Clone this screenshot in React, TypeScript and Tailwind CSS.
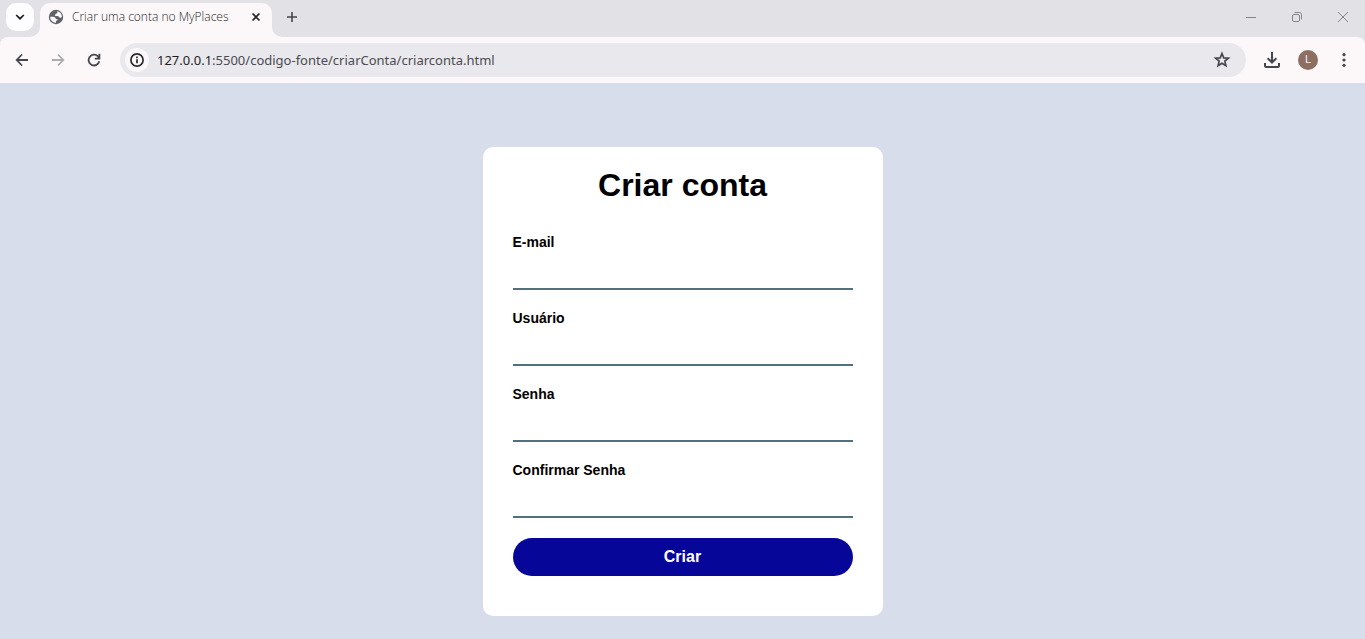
import React from "react";

function TabStrip() {
  return (
    <div className="flex h-[37px] items-start bg-[#e2e1e6] pl-[6px]">
      <button
        type="button"
        aria-label="Pesquisar guias"
        className="mt-[3px] flex size-7 shrink-0 items-center justify-center rounded-[10px] bg-[#fdfcfe] text-[#1f1f1f]"
      >
        <svg viewBox="0 0 10 6" className="h-[6px] w-[10px]" fill="none" stroke="currentColor" strokeWidth="1.7">
          <path d="M1.2 1 5 4.7 8.8 1" />
        </svg>
      </button>

      <div className="relative mt-[3px] ml-[6px] flex h-[34px] w-[232px] shrink-0 items-center rounded-t-[10px] bg-[#fcf8f9] pr-[10px] pb-[6px] pl-[8px]">
        <svg viewBox="0 0 10 10" className="absolute bottom-0 -left-[10px] size-[10px]" fill="#fcf8f9">
          <path d="M10 0v10H0A10 10 0 0 0 10 0z" />
        </svg>
        <svg viewBox="0 0 10 10" className="absolute -right-[10px] bottom-0 size-[10px]" fill="#fcf8f9">
          <path d="M0 0v10h10A10 10 0 0 1 0 0z" />
        </svg>
        <svg viewBox="0 0 16 16" className="size-4 shrink-0">
          <circle cx="8" cy="8" r="7.2" fill="#5f6368" />
          <path
            d="M9.3 2.3A5.9 5.9 0 0 1 13.9 8q-1 1.1-2.4.6-.6-1.5-2-1.5H7.2q-.9-1.6.8-2.2 1.7-.3 1.3-2.6zM2.1 7.8h3.2q2.5.2 2.6 2.1l1.6.4q.3 1.8-1.6 1.8v1.8A5.9 5.9 0 0 1 2.1 7.8z"
            fill="#fcf8f9"
          />
        </svg>
        <span className="ml-2 grow whitespace-nowrap text-[12px] leading-4 font-light text-[#1f1f1f]">
          Criar uma conta no MyPlaces
        </span>
        <button type="button" aria-label="Fechar guia" className="flex size-3 shrink-0 items-center justify-center text-[#1f1f1f]">
          <svg viewBox="0 0 10 10" className="size-[10px]" fill="none" stroke="currentColor" strokeWidth="1.6">
            <path d="m1.5 1.5 7 7m0-7-7 7" />
          </svg>
        </button>
      </div>

      <button type="button" aria-label="Nova guia" className="mt-[3px] ml-[6px] flex size-7 items-center justify-center text-[#45464c]">
        <svg viewBox="0 0 12 12" className="size-3" fill="none" stroke="currentColor" strokeWidth="1.6">
          <path d="M6 1v10M1 6h10" />
        </svg>
      </button>

      <div className="ml-auto flex h-[34px] text-[#85858a]">
        <button type="button" aria-label="Minimizar" className="flex w-[46px] items-center justify-center">
          <svg viewBox="0 0 12 12" className="size-3" fill="none" stroke="currentColor">
            <path d="M1 6.5h10" />
          </svg>
        </button>
        <button type="button" aria-label="Restaurar" className="flex w-[46px] items-center justify-center">
          <svg viewBox="0 0 12 12" className="size-3" fill="none" stroke="currentColor">
            <rect x="1.5" y="3.5" width="7" height="7" rx="1.5" />
            <path d="M3.5 1.5h5a2 2 0 0 1 2 2v5" />
          </svg>
        </button>
        <button type="button" aria-label="Fechar" className="flex w-[45px] items-center justify-center">
          <svg viewBox="0 0 12 12" className="size-3" fill="none" stroke="currentColor">
            <path d="m1 1 10 10M11 1 1 11" />
          </svg>
        </button>
      </div>
    </div>
  );
}

function Toolbar() {
  return (
    <div className="bg-[#e2e1e6]">
      <div className="flex h-[46px] items-center rounded-t-[8px] bg-[#fcf8f9] pr-[7px] pl-[8px] text-[#45464c]">
        <div className="flex gap-2">
          <button type="button" aria-label="Voltar" className="flex size-7 items-center justify-center">
            <svg viewBox="0 0 14 14" className="size-[14px]" fill="none" stroke="currentColor" strokeWidth="1.8">
              <path d="M13 7H2M7 1.5 1.7 7 7 12.5" />
            </svg>
          </button>
          <button type="button" aria-label="Avançar" className="flex size-7 items-center justify-center text-[#aeabaf]">
            <svg viewBox="0 0 14 14" className="size-[14px]" fill="none" stroke="currentColor" strokeWidth="1.8">
              <path d="M1 7h11M7 1.5 12.3 7 7 12.5" />
            </svg>
          </button>
          <button type="button" aria-label="Recarregar" className="flex size-7 items-center justify-center">
            <svg viewBox="0 0 14 14" className="size-[14px]" fill="none" stroke="currentColor" strokeWidth="1.8">
              <path d="M12.3 8.3A5.4 5.4 0 1 1 11 3.4l1.3 1.8M12.4.7v4.9H7.8" />
            </svg>
          </button>
        </div>

        <div className="ml-3 flex h-[34px] grow items-center rounded-full bg-[#e9e8ed] pr-3 pl-[5px]">
          <button
            type="button"
            aria-label="Informações do site"
            className="flex size-6 shrink-0 items-center justify-center rounded-full bg-[#fcf8f9] text-[#2a2a2d]"
          >
            <svg viewBox="0 0 14 14" className="size-[14px]" fill="none" stroke="currentColor" strokeWidth="1.7">
              <circle cx="7" cy="7" r="6.1" />
              <path d="M7 6.3v4M7 3.6v1.6" />
            </svg>
          </button>
          <a
            href="http://127.0.0.1:5500/codigo-fonte/criarConta/criarconta.html"
            className="ml-2 font-['Noto_Sans',sans-serif] text-[13px] leading-5 text-[#4b4b50]"
          >
            <span className="text-[#1f1f1f]">127.0.0.1</span>:5500/codigo-fonte/criarConta/criarconta.html
          </a>
          <button type="button" aria-label="Adicionar aos favoritos" className="ml-auto flex size-6 items-center justify-center">
            <svg viewBox="0 0 24 24" className="size-5" fill="none" stroke="currentColor" strokeWidth="2">
              <path d="m12 4.2 2.1 5.2 5.6.4-4.3 3.6 1.3 5.5-4.7-3-4.7 3 1.3-5.5-4.3-3.6 5.6-.4z" />
            </svg>
          </button>
        </div>

        <div className="ml-3 flex gap-2">
          <button type="button" aria-label="Downloads" className="flex size-7 items-center justify-center">
            <svg viewBox="0 0 16 16" className="size-4" fill="none" stroke="currentColor" strokeWidth="2">
              <path d="M8 0v10M3.7 6.2 8 10.5l4.3-4.3M1 11v2.5q0 1.5 1.5 1.5h11q1.5 0 1.5-1.5V11" />
            </svg>
          </button>
          <button type="button" aria-label="Perfil" className="flex size-7 items-center justify-center">
            <span className="flex size-5 items-center justify-center rounded-full bg-[#8d6e63] font-['Roboto',sans-serif] text-[11px] leading-5 text-[#f3eeec]">
              L
            </span>
          </button>
          <button type="button" aria-label="Menu" className="flex size-7 items-center justify-center">
            <svg viewBox="0 0 4 16" className="h-4 w-1" fill="currentColor">
              <circle cx="2" cy="2.7" r="1.6" />
              <circle cx="2" cy="8" r="1.6" />
              <circle cx="2" cy="13.3" r="1.6" />
            </svg>
          </button>
        </div>
      </div>
    </div>
  );
}

const fields = [
  { id: "email", label: "E-mail", type: "email" },
  { id: "usuario", label: "Usuário", type: "text" },
  { id: "senha", label: "Senha", type: "password" },
  { id: "confirmar", label: "Confirmar Senha", type: "password" },
];

export default function App() {
  return (
    <div className="flex min-h-screen flex-col bg-[#d7ddea]">
      <header className="font-['Open_Sans',sans-serif]">
        <TabStrip />
        <Toolbar />
      </header>
      <main className="flex grow items-start justify-center pt-16 pb-[23px] font-['Liberation_Sans',Arial,sans-serif]">
        <form
          className="w-full max-w-[400px] rounded-[10px] bg-white px-[30px] pt-5 pb-10"
          onSubmit={(event) => event.preventDefault()}
        >
          <h1 className="mb-[31px] text-center text-[32px] leading-9 font-bold text-black">Criar conta</h1>
          <div className="flex flex-col gap-5">
            {fields.map((field) => (
              <div key={field.id} className="flex flex-col">
                <label htmlFor={field.id} className="text-[14px] leading-4 font-bold text-black">
                  {field.label}
                </label>
                <input
                  id={field.id}
                  type={field.type}
                  className="h-10 w-full border-b-2 border-[#53707f] bg-transparent text-[16px] outline-none"
                />
              </div>
            ))}
            <button type="submit" className="h-[38px] rounded-full bg-[#060698] text-[16px] leading-5 font-bold text-white">
              Criar
            </button>
          </div>
        </form>
      </main>
    </div>
  );
}
